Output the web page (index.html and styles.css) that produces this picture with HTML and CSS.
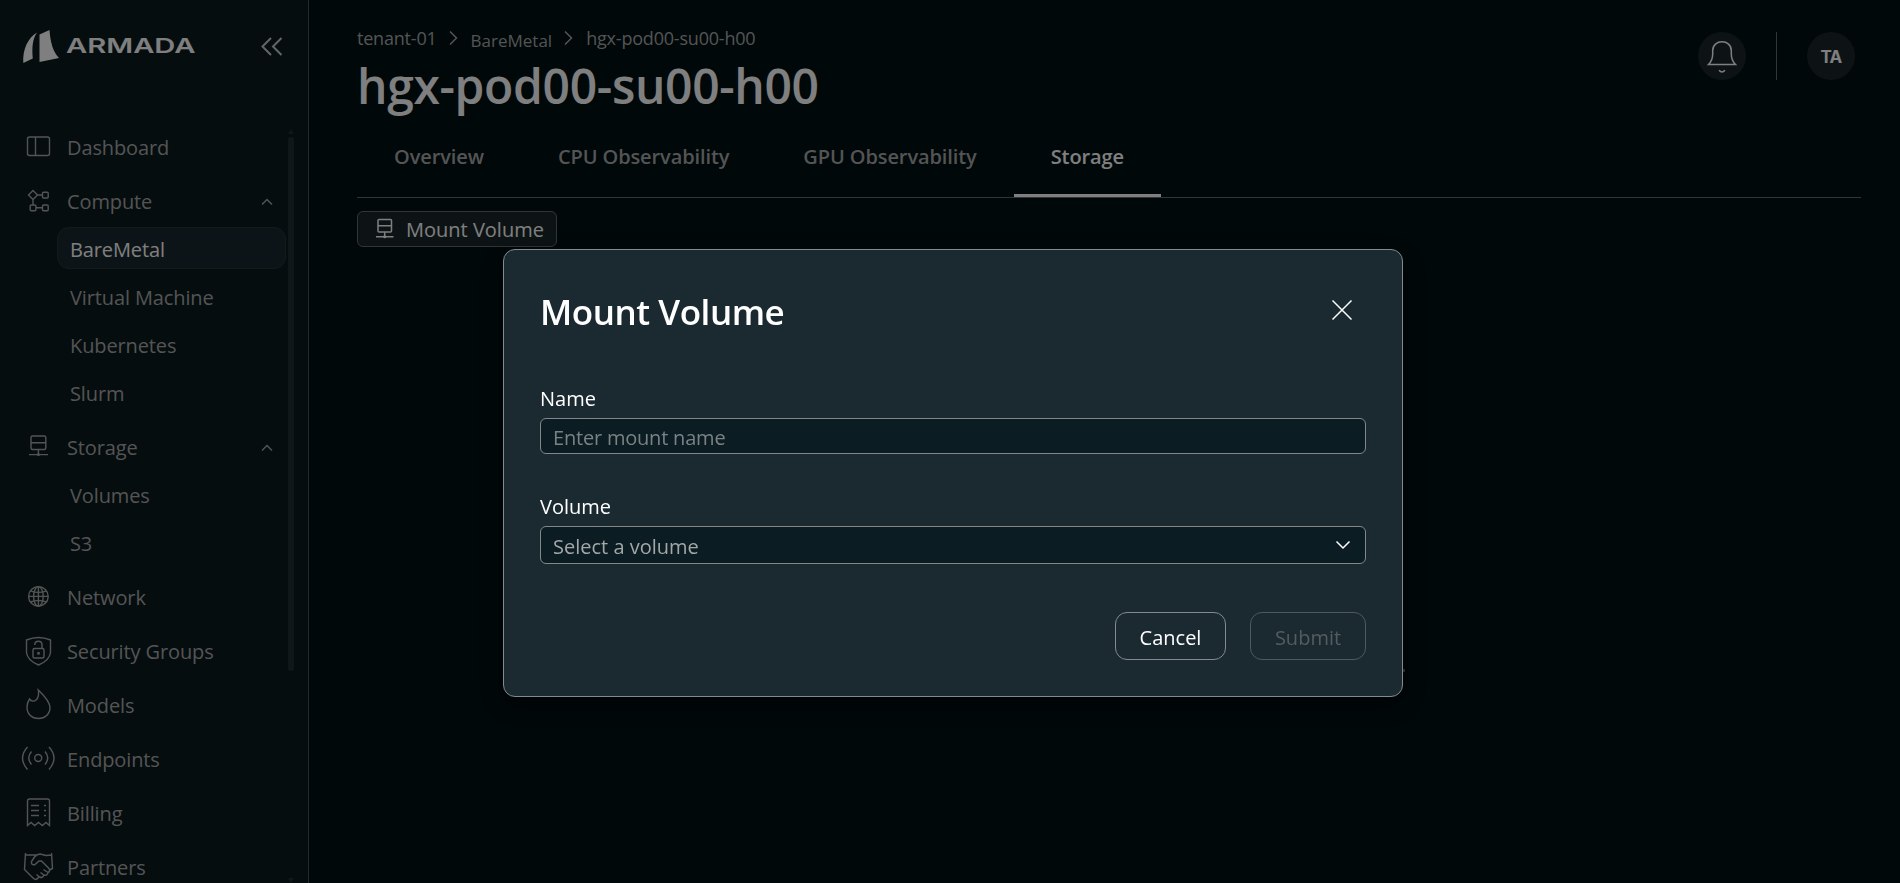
FILE: index.html
```html
<!DOCTYPE html>
<html lang="en">
<head>
    <meta charset="UTF-8">
    <meta name="viewport" content="width=device-width, initial-scale=1.0">
    <title>hgx-pod00-su00-h00</title>
    <link rel="stylesheet" href="styles.css">
</head>
<body>
    <div class="app">
        <aside class="sidebar">
            <div class="brand">
                <svg class="logo" width="180" height="36" viewBox="0 0 180 36">
                    <path d="M15 3.500C6 9 .5 20 1.300 34L10.800 29.500C9.800 18.500 10.500 10 15 3.500Z"/>
                    <path d="M17.500 5.500L27.500 1C28.500 14 31 22.500 37 29L17.500 33Z"/>
                    <text x="44" y="24" textLength="129.500" lengthAdjust="spacingAndGlyphs">ARMADA</text>
                </svg>
                <svg class="collapse" width="24" height="24" viewBox="0 0 24 24"><path d="M11 3L2.500 11.500L11 20M21.500 3L13 11.500L21.500 20"/></svg>
            </div>
            <div class="nav-wrap">
                <nav class="nav">
                    <a class="nav-item">
                        <svg class="icon" viewBox="0 0 32 32"><rect x="5.500" y="7" width="22" height="18.500" rx="2"/><path d="M13.500 7V25.500"/></svg>
                        <span>Dashboard</span>
                    </a>
                    <div class="nav-group">
                        <a class="nav-item">
                            <svg class="icon" viewBox="0 0 32 32"><path d="M11 6.500L15.500 11L11 15.500L6.500 11ZM15.500 11H20.500M11 15.500V21M14 23.800H20.500"/><rect x="20.500" y="8.300" width="5.700" height="5.700" rx="1"/><rect x="8.200" y="21" width="5.700" height="5.700" rx="1"/><rect x="20.500" y="21" width="5.700" height="5.700" rx="1"/></svg>
                            <span>Compute</span>
                            <svg class="caret" viewBox="0 0 12 8"><path d="M1 6.500L6 1.500L11 6.500"/></svg>
                        </a>
                        <a class="sub-item active">BareMetal</a>
                        <a class="sub-item">Virtual Machine</a>
                        <a class="sub-item">Kubernetes</a>
                        <a class="sub-item">Slurm</a>
                    </div>
                    <div class="nav-group">
                        <a class="nav-item">
                            <svg class="icon" viewBox="0 0 32 32"><rect x="9" y="6" width="14.800" height="13.500" rx="1.500"/><path d="M9 12.800H23.800M16.400 19.500V24.500M7 24.600H26"/><circle cx="16.400" cy="24.500" r=".8"/></svg>
                            <span>Storage</span>
                            <svg class="caret" viewBox="0 0 12 8"><path d="M1 6.500L6 1.500L11 6.500"/></svg>
                        </a>
                        <a class="sub-item">Volumes</a>
                        <a class="sub-item">S3</a>
                    </div>
                    <a class="nav-item">
                        <svg class="icon" viewBox="0 0 32 32"><circle cx="16.400" cy="16.400" r="9.800"/><ellipse cx="16.400" cy="16.400" rx="4.800" ry="9.800"/><path d="M16.400 6.600V26.200M6.600 16.400H26.200M8.500 10.800Q16.400 14 24.300 10.800M8.500 22Q16.400 18.800 24.300 22"/></svg>
                        <span>Network</span>
                    </a>
                    <a class="nav-item">
                        <svg class="icon" viewBox="0 0 32 32"><path d="M4.500 6Q16.500 1 28.500 6V18.500Q27.500 26.500 16.500 31Q5.500 26.500 4.500 18.500Z"/><rect x="11" y="14.500" width="11" height="9.500" rx="1.500"/><path d="M12.800 11C12.800 6 20 6 20 11V14.500"/><circle cx="16.500" cy="19.200" r=".8"/></svg>
                        <span>Security Groups</span>
                    </a>
                    <a class="nav-item">
                        <svg class="icon" viewBox="0 0 32 32"><path d="M16.300 2C22.500 8 28 14 28 19.500C28 26 23 30.500 16.500 30.500S5 26 5 19.500C5 16 5.800 13.500 7.500 11C9.500 13.500 12 13.800 14 12C16.500 9.800 17 6 16.300 2Z"/></svg>
                        <span>Models</span>
                    </a>
                    <a class="nav-item">
                        <svg class="icon" viewBox="0 0 32 32"><circle cx="16.200" cy="16" r="3.500"/><path d="M9.500 9.500Q4 16 9.500 22.500M23 9.500Q28.500 16 23 22.500M5.500 5Q-4.500 16 5.500 27.500M27 5Q37 16 27 27.500"/></svg>
                        <span>Endpoints</span>
                    </a>
                    <a class="nav-item">
                        <svg class="icon" viewBox="0 0 32 32"><path d="M5.500 29.500V5Q5.500 3 7.500 3H25.500Q27.500 3 27.500 5V29.500L24 26.500L20.300 29.500L16.500 26.500L12.700 29.500L9 26.500ZM9 9.500H17M9 14.500H17M9 19.500H17M22 9.500H24M22 14.500H24M22 19.500H24"/></svg>
                        <span>Billing</span>
                    </a>
                    <a class="nav-item">
                        <svg class="icon" viewBox="0 0 32 32"><path d="M3.500 3L2.500 19.500L11.500 28.500Q14 30.500 16 28L17 26.500M29.500 3L30.500 18.500L27.500 20M3.500 5H14M29.500 5L24 5.500L18 4Q15 4 12.500 7L9.500 11.500Q9 15.500 13 14.500L17 11H19.500L27 18.500Q28.500 21.500 26 22.500L21.500 19.500M26 22.500Q25.500 26 22 25L18.500 22.500M22 25Q20.500 28.500 17.500 27L14.500 24.500"/></svg>
                        <span>Partners</span>
                    </a>
                </nav>
                <div class="scrollbar">
                    <svg width="6" height="6" viewBox="0 0 6 6"><path d="M3 0L6 5H0Z"/></svg>
                    <div class="thumb"></div>
                    <svg class="down" width="6" height="6" viewBox="0 0 6 6"><path d="M0 1H6L3 6Z"/></svg>
                </div>
            </div>
        </aside>

        <main class="main">
            <header class="header">
                <div>
                    <div class="breadcrumb">
                        <a>tenant-01</a>
                        <svg viewBox="0 0 9 16"><path d="M1 1.500L7.500 8L1 14.500"/></svg>
                        <a class="parent">BareMetal</a>
                        <svg viewBox="0 0 9 16"><path d="M1 1.500L7.500 8L1 14.500"/></svg>
                        <a>hgx-pod00-su00-h00</a>
                    </div>
                    <h1>hgx-pod00-su00-h00</h1>
                </div>
                <div class="actions">
                    <div class="circle">
                        <svg width="30" height="34" viewBox="0 0 30 34"><path d="M1.500 24.500H28.500C26 22 24.300 19 24.300 14V10.500C24.300 5 20 1.800 15 1.800S5.700 5 5.700 10.500V14C5.700 19 4 22 1.500 24.500ZM12 30.300Q15 33.500 18 30.300"/></svg>
                    </div>
                    <div class="divider"></div>
                    <div class="circle avatar">TA</div>
                </div>
            </header>
            <div class="tabs">
                <a class="tab">Overview</a>
                <a class="tab">CPU Observability</a>
                <a class="tab">GPU Observability</a>
                <a class="tab selected">Storage</a>
            </div>
            <button class="mount-button">
                <svg width="20" height="22" viewBox="0 0 20 22"><rect x="3" y="1.500" width="13.500" height="12.500" rx="1"/><path d="M3 7.700H16.500M9.700 14V18.700M1 18.700H18.500"/><circle cx="9.700" cy="18.700" r=".8"/></svg>
                <span>Mount Volume</span>
            </button>
            <span class="message-end"></span>
        </main>
    </div>

    <div class="overlay">
        <div class="modal">
            <div class="modal-header">
                <h2>Mount Volume</h2>
                <svg width="22" height="22" viewBox="0 0 22 22"><path d="M1.500 1.500L20.500 20.500M20.500 1.500L1.500 20.500"/></svg>
            </div>
            <label for="mount-name">Name</label>
            <input type="text" id="mount-name" placeholder="Enter mount name">
            <label>Volume</label>
            <div class="select">
                <span>Select a volume</span>
                <svg width="16" height="10" viewBox="0 0 16 10"><path d="M1.500 1.500L8 8L14.500 1.500"/></svg>
            </div>
            <div class="buttons">
                <button class="cancel">Cancel</button>
                <button class="submit" disabled>Submit</button>
            </div>
        </div>
    </div>
</body>
</html>
```
FILE: styles.css
```css
* {
    box-sizing: border-box;
}
body {
    margin: 0;
    height: 883px;
    overflow: hidden;
    background-color: #001014;
    font-family: 'Open Sans', 'Noto Sans', sans-serif;
    font-size: 20px;
    color: #a8a9a9;
}
svg {
    flex: none;
    fill: none;
    stroke: currentColor;
    stroke-width: 1.5;
    overflow: visible;
}
h1, h2 {
    margin: 0;
    font-weight: 600;
    color: #fff;
}
button, input {
    font-family: inherit;
    font-size: 20px;
}
.app {
    display: flex;
    height: 883px;
}

/* Sidebar */
.sidebar {
    width: 309px;
    height: 883px;
    flex: none;
    overflow: hidden;
    background-color: #0a1a1f;
    border-right: 1px solid #4c5254;
}
.brand {
    display: flex;
    justify-content: space-between;
    height: 125px;
    padding: 29px 24px 0 22px;
    color: #fff;
}
.logo {
    fill: #fff;
    stroke: none;
}
.logo text {
    font-family: Inter, sans-serif;
    font-size: 20.5px;
    font-weight: 600;
}
.collapse {
    margin-top: 6px;
    stroke-width: 2;
    color: #c8caca;
}
.nav-wrap {
    display: flex;
    height: 758px;
}
.nav {
    display: flex;
    flex-direction: column;
    gap: 12px;
    width: 288px;
    padding-left: 22px;
    letter-spacing: -0.12px;
}
.nav-group {
    display: flex;
    flex-direction: column;
    gap: 6px;
}
.nav-item {
    display: flex;
    align-items: center;
    flex: none;
    height: 42px;
}
.nav-item span {
    padding-top: 4px;
    line-height: 40px;
}
.icon {
    width: 32px;
    height: 32px;
    margin-right: 13px;
    stroke-width: 1.4;
}
.caret {
    width: 12px;
    height: 8px;
    margin: 3px 15px 0 auto;
}
.sub-item {
    flex: none;
    height: 42px;
    margin: 0 2px 0 35px;
    padding: 2px 12px 0;
    border: 1px solid transparent;
    border-radius: 12px;
    line-height: 40px;
}
.active {
    background-color: #1a292e;
    border-color: #283538;
    color: #fff;
}
.scrollbar {
    display: flex;
    flex-direction: column;
    width: 6px;
    padding-top: 4px;
    color: #202e32;
}
.scrollbar svg {
    fill: currentColor;
    stroke: none;
}
.thumb {
    height: 534px;
    margin-top: 2px;
    border-radius: 3px;
    background-color: #202e32;
}
.down {
    margin-top: auto;
}

/* Main area */
.main {
    flex: 1;
    padding: 26px 39px 0 48px;
}
.header {
    display: flex;
    justify-content: space-between;
    height: 88px;
}
.breadcrumb {
    display: flex;
    height: 30px;
    font-size: 18px;
    line-height: 24px;
    letter-spacing: -0.2px;
}
.breadcrumb svg {
    width: 9px;
    height: 16px;
    margin: 4px 13px 0 12px;
}
.breadcrumb .parent {
    margin-top: 3px;
    font-size: 17px;
    letter-spacing: 0;
}
h1 {
    font-size: 48px;
    line-height: 60px;
    letter-spacing: -0.35px;
}
.actions {
    display: flex;
    padding: 6px 6px 0 0;
}
.circle {
    display: flex;
    align-items: center;
    justify-content: center;
    width: 48px;
    height: 48px;
    border-radius: 50%;
    background-color: #1a272b;
    color: #fff;
}
.circle svg {
    margin-top: 1px;
}
.divider {
    width: 1px;
    height: 48px;
    margin: 0 30px;
    background-color: #66696a;
}
.avatar {
    padding-top: 2px;
    font-family: Inter, sans-serif;
    font-size: 17px;
    font-weight: 700;
    letter-spacing: -0.8px;
}
.tabs {
    display: flex;
    height: 84px;
    border-bottom: 1px solid #66696a;
    font-weight: 600;
    letter-spacing: -0.1px;
}
.tab {
    height: 83px;
    padding: 31px 37px 0;
    line-height: 24px;
}
.selected {
    border-bottom: 3px solid #fff;
    color: #fff;
}
.mount-button {
    display: flex;
    align-items: center;
    width: 200px;
    height: 36px;
    margin-top: 13px;
    padding: 0 0 0 17px;
    border: 1px solid #66696a;
    border-radius: 6px;
    background-color: #1a272b;
    color: #fff;
}
.mount-button svg {
    margin: 0 11px 0 0;
}
.mount-button span {
    line-height: 32px;
    padding-top: 2px;
}
.message-end {
    position: absolute;
    left: 1402px;
    top: 669px;
    width: 3px;
    height: 3px;
    background-color: #66696a;
}

/* Mount volume dialog */
.overlay {
    position: fixed;
    inset: 0;
    padding: 249px 0 0 503px;
    background-color: rgba(0, 0, 0, 0.5);
}
.modal {
    display: flex;
    flex-direction: column;
    width: 900px;
    height: 448px;
    padding: 36px;
    border: 1px solid #848a8d;
    border-radius: 12px;
    background-color: #1b2a31;
    box-shadow: 0 8px 24px rgba(0, 0, 0, 0.4);
    color: #fff;
}
.modal-header {
    display: flex;
    justify-content: space-between;
    height: 50px;
    margin-bottom: 51px;
}
.modal-header h2 {
    padding-top: 1px;
    font-size: 35px;
    line-height: 50px;
    letter-spacing: -0.45px;
}
.modal-header svg {
    margin: 13px 13px 0 0;
}
.modal label {
    margin-bottom: 7px;
    font-weight: 500;
    line-height: 24px;
}
.modal input, .select {
    padding: 2px 12px 0;
    border: 1px solid #848788;
    border-radius: 6px;
    background-color: #0b1c22;
}
.modal input {
    height: 36px;
    margin-bottom: 41px;
    letter-spacing: -0.2px;
}
.modal input::placeholder {
    color: #7a8284;
}
.select {
    display: flex;
    align-items: center;
    justify-content: space-between;
    height: 38px;
    margin-bottom: 48px;
    color: #a4a7a8;
}
.select svg {
    margin: 0 2px 3px 0;
    stroke-width: 1.5;
    color: #fff;
}
.buttons {
    display: flex;
    justify-content: flex-end;
    gap: 24px;
}
.buttons button {
    width: 111px;
    height: 48px;
    padding: 2px 0 0;
    border: 1px solid #848a8d;
    border-radius: 12px;
    background: none;
    color: #fff;
}
.buttons .submit {
    width: 116px;
    border-color: #50585b;
    color: #555b5e;
}
```
